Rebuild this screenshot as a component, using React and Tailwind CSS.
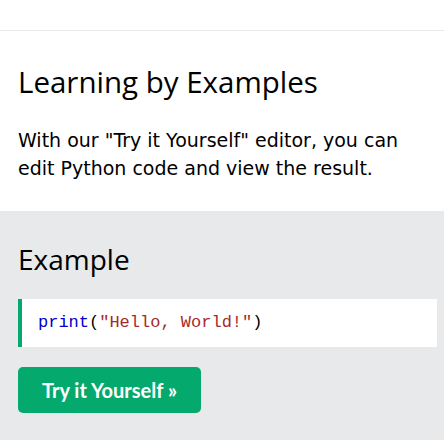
export default function App() {
  return (
    <div className="w-[444px] h-[440px] overflow-hidden bg-white text-black">
      <div className="h-[31px] border-b border-[#e9e9e9]" />

      <div className="pl-[18px] pr-[7px] pt-[31px] pb-[29px]">
        <h2 className="text-[29.5px] leading-[40px] font-['Open_Sans',sans-serif] font-normal">
          Learning by Examples
        </h2>
        <p className="mt-[24px] text-[19px] leading-[28px] font-['DejaVu_Sans',Verdana,sans-serif]">
          With our "Try it Yourself" editor, you can edit Python code and view the result.
        </p>
      </div>

      <div className="bg-[#e7e9eb] pl-[18px] pr-[7px] pt-[28px] pb-[40px]">
        <h3 className="text-[28px] leading-[40px] font-['Open_Sans',sans-serif] font-normal">
          Example
        </h3>
        <div className="mt-[20px] bg-white border-l-4 border-[#04aa6d] h-[48px] flex items-center pl-[16px]">
          <code className="font-['Liberation_Mono',monospace] text-[17px]">
            <span className="text-[#0000cd]">print</span>
            <span>(</span>
            <span className="text-[#a52a2a]">"Hello, World!"</span>
            <span>)</span>
          </code>
        </div>
        <button className="mt-[20px] h-[46px] w-[183px] rounded-[5px] bg-[#04aa6d] text-white text-[20px] font-bold font-['Lato',sans-serif]">
          Try it Yourself »
        </button>
      </div>
    </div>
  );
}
